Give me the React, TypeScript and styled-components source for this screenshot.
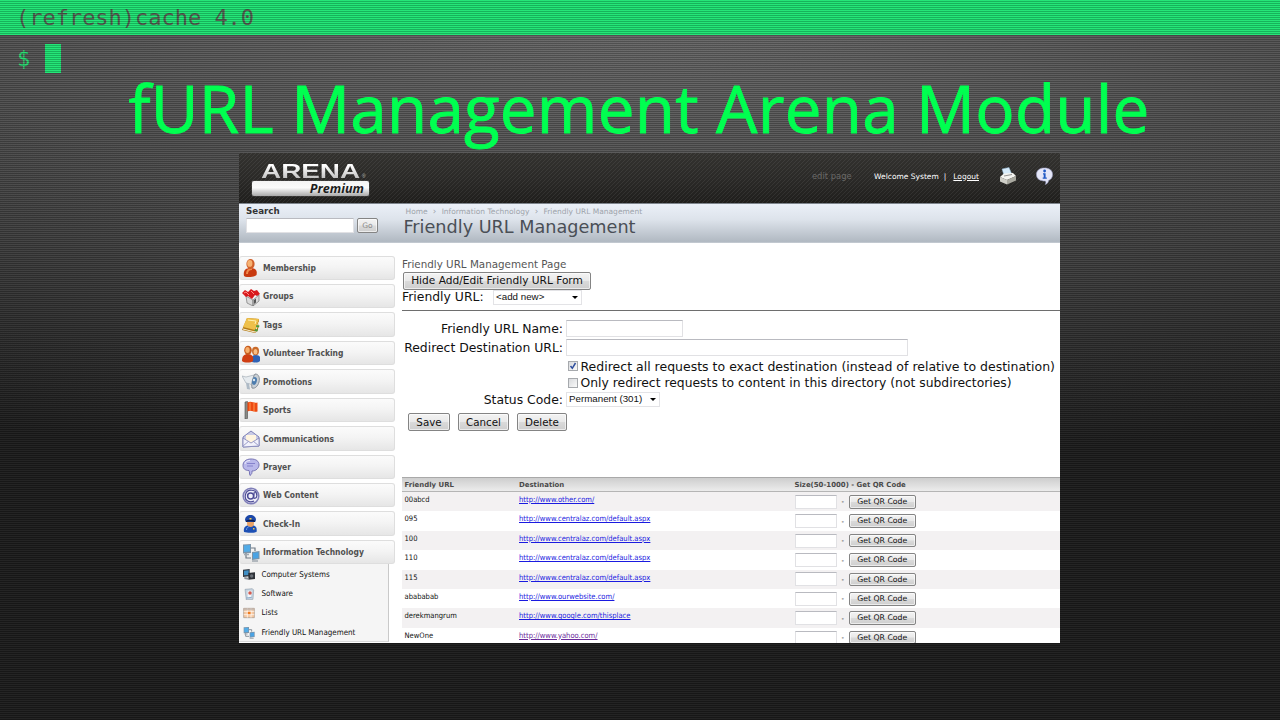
import React from 'react';
import styled, { createGlobalStyle } from 'styled-components';

const verdana = '"DejaVu Sans", Verdana, sans-serif';
const tahoma = '"DejaVu Sans Condensed", "DejaVu Sans", Tahoma, sans-serif';
const arial = '"Liberation Sans", Arial, sans-serif';

const GlobalStyle = createGlobalStyle`
  * { box-sizing: border-box; }
  body { margin: 0; overflow: hidden; background: #161616; }
`;

const Slide = styled.div`
  position: relative;
  width: 1280px;
  height: 720px;
  overflow: hidden;
  display: flex;
  flex-direction: column;
  background: radial-gradient(
    ellipse 1800px 460px at 50% 0,
    #6a6a6a 0%, #656565 12%, #555 35%, #404040 62%, #2d2d2d 82%, #1d1d1d 100%
  );
`;

const Scanlines = styled.div`
  position: absolute;
  inset: 0;
  pointer-events: none;
  background: repeating-linear-gradient(
    to bottom,
    rgba(255, 255, 255, 0.03) 0 1px,
    rgba(0, 0, 0, 0.22) 1px 2px
  );
`;

const TerminalBar = styled.header`
  flex: none;
  height: 35px;
  padding-left: 16px;
  background: #1ee574;
  color: #555c50;
  font: 22px/36px "DejaVu Sans Mono", Consolas, monospace;
  letter-spacing: -0.02px;
  white-space: pre;
`;

const Prompt = styled.div`
  flex: none;
  height: 38px;
  padding: 9px 0 0 17px;
  display: flex;
  gap: 15px;
  color: #25dc70;
  font: 22px/29px "DejaVu Sans Mono", Consolas, monospace;
`;

const Cursor = styled.span`
  width: 16px;
  height: 29px;
  background: #1ee574;
`;

const Title = styled.h1`
  position: relative;
  flex: none;
  margin: 0;
  height: 80px;
  padding-right: 2px;
  text-align: center;
  color: #00ff50;
  font: 400 65.5px/69px "Open Sans", Calibri, sans-serif;
  -webkit-text-stroke: 0.9px #00ff50;
  letter-spacing: 0.25px;
  white-space: nowrap;
`;

const Window = styled.main`
  position: relative;
  flex: none;
  width: 821px;
  height: 490px;
  margin-left: 239px;
  overflow: hidden;
  display: flex;
  flex-direction: column;
  background: #fff;
  font-family: ${verdana};
  white-space: nowrap;
`;

const Masthead = styled.div`
  flex: none;
  height: 51px;
  display: flex;
  justify-content: space-between;
  border-bottom: 1px solid #7d848c;
  background:
    repeating-linear-gradient(135deg, rgba(255, 255, 255, 0.07) 0 1px, transparent 1px 2.83px),
    linear-gradient(#33322f, #2a2927 55%, #1f1e1c);
`;

const Brand = styled.div`
  width: 117px;
  margin: 8px 0 0 13px;
`;

const BrandName = styled.div`
  height: 19px;
  padding-left: 9px;
  display: flex;
  align-items: flex-end;
  color: #e8e8e8;
  font: 700 20.5px/19px ${arial};
`;

const BrandWord = styled.span`
  width: 101px;
  flex: none;
  transform: scaleX(1.36);
  transform-origin: left;
  background: linear-gradient(#fff 25%, #b9b9b9);
  background-clip: text;
  color: transparent;
`;

const Registered = styled.span`
  font: 5px/8px ${arial};
  color: #bbb;
`;

const BrandTier = styled.div`
  height: 15px;
  margin-top: 1px;
  padding-right: 5px;
  border-radius: 2px;
  text-align: right;
  color: #1d1d1d;
  background: linear-gradient(#f4f4f4, #fbfbfb 45%, #a9a9a9);
  box-shadow: 0 0 1px #ddd;
  font: italic 700 12.6px/15px "Open Sans", sans-serif;
`;

const Account = styled.div`
  height: 46px;
  padding-right: 7px;
  display: flex;
  align-items: center;
  color: #fff;
  font-size: 7.5px;
`;

const EditPage = styled.span`
  margin-right: 22.5px;
  color: #6b6a68;
  font-size: 8.4px;
`;

const Divider = styled.span`
  margin: 0 7px 0 5px;
`;

const Logout = styled.span`
  margin-right: 20px;
  text-decoration: underline;
`;

const HelpSlot = styled.span`
  display: flex;
  margin-left: 19px;
`;

const SubHeader = styled.div`
  flex: none;
  height: 39px;
  display: flex;
  background: linear-gradient(#ebf0f8, #dde3eb 40%, #b1b9c2 96%, #c9cfd6);
`;

const SearchBox = styled.div`
  width: 164.5px;
  padding: 1px 0 0 7px;
  font: 700 8.7px/12px ${verdana};
  color: #333;
`;

const SearchRow = styled.div`
  display: flex;
  gap: 3px;
  margin-top: 1px;
`;

const TextField = styled.span<{ $w: number; $h: number }>`
  flex: none;
  display: block;
  width: ${(p) => p.$w}px;
  height: ${(p) => p.$h}px;
  border: 1px solid #e1e1e4;
  border-top-color: #b9bac0;
  background: #fff;
`;

const PushButton = styled.span<{ $w: number; $h: number; $size: number; $muted?: boolean }>`
  flex: none;
  display: flex;
  align-items: center;
  justify-content: center;
  width: ${(p) => p.$w}px;
  height: ${(p) => p.$h}px;
  border: 1px solid #848484;
  border-radius: 2px;
  background: linear-gradient(#f3f3f3, #e9e9e9 48%, #dadada 52%, #cecece);
  box-shadow: inset 0 0 0 1px rgba(255, 255, 255, 0.6);
  color: ${(p) => (p.$muted ? '#888' : '#111')};
  font: 400 ${(p) => p.$size}px/1 ${verdana};
`;

const Heading = styled.div`
  padding-top: 2px;
`;

const Breadcrumb = styled.div`
  height: 11px;
  padding-left: 2px;
  display: flex;
  color: #9ea4ab;
  font-size: 7.5px;
  line-height: 11px;
`;

const Chevron = styled.span`
  width: 14px;
  text-align: center;
  font-size: 9px;
  line-height: 10px;
`;

const PageTitle = styled.div`
  color: #4a4f56;
  font-size: 17.65px;
  line-height: 20px;
`;

const Content = styled.div`
  flex: 1;
  min-height: 0;
  display: flex;
`;

const Sidebar = styled.nav`
  flex: none;
  width: 163px;
  padding-top: 12.6px;
`;

const NavItem = styled.div`
  width: 156px;
  height: 24.4px;
  margin-bottom: 4.04px;
  padding: 1px 0 0 2px;
  display: flex;
  align-items: center;
  gap: 3px;
  border: 1px solid #dedede;
  border-left-color: #ececec;
  border-radius: 3px;
  background: linear-gradient(#fbfbfb, #f4f4f4 45%, #e6e6e6);
  color: #505050;
  font: 700 8.45px/1 ${tahoma};
`;

const SubMenu = styled.div`
  width: 150px;
  height: 78px;
  margin-top: -4px;
  padding-top: 0.6px;
  border-right: 1px solid #c9c9c9;
  border-bottom: 1px solid #d8d8d8;
  background: #f5f5f5;
`;

const SubItem = styled.div`
  height: 19.4px;
  padding-left: 4px;
  display: flex;
  align-items: center;
  gap: 6.5px;
  color: #111;
  font: 400 7.95px/1 ${tahoma};
`;

const Page = styled.section`
  flex: 1;
  min-width: 0;
  color: #111;
`;

const PageNote = styled.div`
  padding-top: 14px;
  height: 28.5px;
  color: #555;
  font-size: 10.35px;
  line-height: 15px;
`;

const ToggleRow = styled.div`
  padding-left: 1px;
`;

const PickerRow = styled.div`
  height: 21.5px;
  display: flex;
  gap: 9px;
  border-bottom: 1px solid #6e6e6e;
  font-size: 12.4px;
  line-height: 14px;
`;

const Select = styled.span<{ $w: number }>`
  flex: none;
  display: flex;
  align-items: center;
  justify-content: space-between;
  width: ${(p) => p.$w}px;
  height: 15px;
  padding: 0 3px 0 2.5px;
  border: 1px solid #e3e3e6;
  background: #fff;
  font: 400 9.75px/1 ${arial};
`;

const Caret = styled.span`
  width: 0;
  border: 3px solid transparent;
  border-top-color: #000;
  border-bottom: 0;
`;

const Form = styled.div`
  padding-top: 7.5px;
  height: 102px;
`;

const FormRow = styled.div<{ $h: number }>`
  display: grid;
  grid-template-columns: 161px 1fr;
  column-gap: 2.5px;
  align-items: center;
  height: ${(p) => p.$h}px;
  font-size: 12.4px;
`;

const Label = styled.span`
  text-align: right;
`;

const CheckLine = styled.span<{ $size: number }>`
  display: flex;
  align-items: center;
  gap: 2.5px;
  padding-left: 2.5px;
  font-size: ${(p) => p.$size}px;
`;

const Checkbox = styled.span`
  flex: none;
  width: 10px;
  height: 10px;
  display: flex;
  border: 1px solid #a6a9ad;
  background: linear-gradient(135deg, #d8dadd, #fafafa);
`;

const Actions = styled.div`
  height: 64px;
  padding-left: 6px;
  display: flex;
  gap: 8px;
`;

const Grid = styled.div`
  font-family: ${tahoma};
`;

const GridHead = styled.div`
  display: grid;
  grid-template-columns: 114.5px 275.5px 1fr;
  height: 15px;
  padding-left: 2.5px;
  border-top: 1px solid #a9a9a9;
  border-bottom: 1px solid #b5b5b5;
  background: linear-gradient(#cecece, #ececec);
  color: #4a4a4a;
  font: 700 6.95px/14px ${verdana};
`;

const GridRow = styled.div<{ $alt: boolean }>`
  display: grid;
  grid-template-columns: 114.5px 275.5px 1fr;
  height: 19.42px;
  padding: 1px 0 0 2.5px;
  background: ${(p) => (p.$alt ? '#f3f1f2' : '#fff')};
  font-size: 7.55px;
  line-height: 13px;
`;

const Link = styled.span<{ $visited?: boolean }>`
  color: ${(p) => (p.$visited ? '#6a2a9a' : '#1a1ae0')};
  text-decoration: underline;
`;

const QrCell = styled.div`
  display: flex;
  align-items: center;
  height: 17.6px;
`;

const Dash = styled.span`
  width: 12.5px;
  text-align: center;
`;

type IconName =
  | 'member' | 'groups' | 'tags' | 'volunteers' | 'promo' | 'flag' | 'mail'
  | 'prayer' | 'at' | 'officer' | 'network' | 'systems' | 'software' | 'lists';

const art: Record<IconName, React.ReactNode> = {
  member: (
    <>
      <path d="M2 17c-1-5 1-8 6.500-8s7 3 6 7c-2 2-10 3-12.500 1z" fill="#c83a10" />
      <path d="M5 15c0-4 2-5 5-5" stroke="#ef8a4c" strokeWidth="2" fill="none" />
      <ellipse cx="8.5" cy="5" rx="4.1" ry="4.9" fill="#d0602a" />
      <ellipse cx="7.8" cy="4.4" rx="2.6" ry="3.4" fill="#f7b272" />
    </>
  ),
  groups: (
    <>
      <path d="M4 8l7 4v6l-6-3zM11 12l6-5v6l-6 5z" fill="#dadada" stroke="#777" strokeWidth=".7" />
      <path d="M12 12l2-1.500v4l-2 1.500z" fill="#555" />
      <path d="M0 5l3-3 3 2 3-3 3 2 3-1 3 4-3 2-2 -1-3 4-4-3-2 1z" fill="#d8191c" />
      <path d="M2 5l2-1 3 3M9 3l3 3" stroke="#ff8a80" fill="none" />
    </>
  ),
  tags: (
    <>
      <path d="M5 2l12 1-1 11-3 3-13-3z" fill="#b57a14" />
      <path d="M5 2l12 1-4 11-12-3z" fill="#eec04a" />
      <path d="M6 4l8 1-1 3" stroke="#fff0b0" fill="none" />
      <path d="M1 13l12 3 4-10" stroke="#f7efd2" fill="none" />
      <path d="M14.500 9l3 .5-.5 2-3-.5zM13 13l3 .5-.6 2-3-.5z" fill="#4b9a3a" />
    </>
  ),
  volunteers: (
    <>
      <path d="M9 16c0-5 2-6 5-6 4 0 5 3 4 6-2 2-7 2-9 0z" fill="#2f62b5" />
      <ellipse cx="13.5" cy="6" rx="3.5" ry="4.2" fill="#c96a2a" />
      <ellipse cx="13.5" cy="6.8" rx="2" ry="2.7" fill="#f7bd84" />
      <path d="M0 16c0-5 2-7 6-7s6 3 5 7c-2 2-9 2-11 0z" fill="#cf3d12" />
      <ellipse cx="6" cy="5.3" rx="3.8" ry="4.5" fill="#c75b1c" />
      <ellipse cx="5.5" cy="5" rx="2.2" ry="3" fill="#f7ae6c" />
    </>
  ),
  promo: (
    <>
      <path d="M0 3l4 1 8-2 1 12-5-3-4-1z" fill="#e6ebef" stroke="#a5afb8" strokeWidth=".7" />
      <path d="M4 10l1 6 3 .5-1-6z" fill="#aebac6" />
      <path d="M13 1c4 0 5 4 4 8s-4 7-7 6c-1-4 1-11 3-14z" fill="#c9d0d6" stroke="#868e96" />
      <ellipse cx="12.500" cy="8" rx="2.300" ry="4" transform="rotate(15 12.500 8)" fill="#4c7cae" />
      <circle cx="12" cy="7" r="1.200" fill="#dce8f2" />
    </>
  ),
  flag: (
    <>
      <path d="M3 1l2.500-.5v17l-2.500.5z" fill="#8a8a86" stroke="#4a4a4a" strokeWidth=".6" />
      <path d="M5.500 1.500c4-2 6 1 10 0v9c-4 1-6-2-10 0z" fill="#ec4a12" />
      <path d="M8 1.500v8M12 2v8.500" stroke="#ff8a45" strokeWidth="1.200" />
    </>
  ),
  mail: (
    <>
      <path d="M1 7l8-6 8 6v9l-16 1z" fill="#c9cbe6" stroke="#7f82b6" />
      <path d="M4 5h10v6l-5 3-5-3z" fill="#fff5df" />
      <path d="M1 8l8 5 8-5v8l-16 1z" fill="#f1f1fb" stroke="#7f82b6" strokeWidth=".8" />
      <path d="M1 16l6-5M17 16l-6-5" stroke="#9c9fca" />
    </>
  ),
  prayer: (
    <>
      <path d="M9 1c5 0 8 2 8 6 0 3-3 6-7 6 0 2 0 3-2 4.500-1-2 0-3-1-5-4 0-6-2-6-5 0-4 3-6.500 8-6.500z" fill="#b9b8ea" stroke="#7774b4" />
      <path d="M5 5.500h8M5 8h6" stroke="#8582cc" />
      <path d="M3 6c0-2 2-3.500 5-3.500" stroke="#eeeefc" fill="none" />
    </>
  ),
  at: (
    <>
      <circle cx="9" cy="9" r="7.800" fill="#efeffa" stroke="#7f7eb8" strokeWidth="1.600" />
      <circle cx="8.600" cy="9" r="3" fill="none" stroke="#4c4b95" strokeWidth="1.500" />
      <path d="M12.300 5l-.7 5c0 2 3 1.800 3.300-1.200 0-7-10-7.500-11.500-1C2 14 8 16 12 14" fill="none" stroke="#4c4b95" strokeWidth="1.200" />
    </>
  ),
  officer: (
    <>
      <path d="M2 17c-1-5 2-7 6.500-7s7 2 6 7c-3 1-9.500 1-12.500 0z" fill="#1c4fb4" />
      <ellipse cx="8.500" cy="8" rx="3.500" ry="4" fill="#e9a266" />
      <path d="M3 5c0-3 2.500-5 5.500-5s5.500 2 5.500 5l-1 2h-9z" fill="#1d48a8" />
      <path d="M4 6.500c2-1.500 7-1.500 9 0" stroke="#0c1d50" strokeWidth="1.500" fill="none" />
      <path d="M7.500 3h2v1.500h-2zM11 13h1.500v1.500H11z" fill="#f5c94a" />
      <path d="M4.500 15c0-2 1-3 3-3.500" stroke="#6b9be8" fill="none" />
    </>
  ),
  network: (
    <>
      <path d="M1 0.500l8-.5v9l-8 .5z" fill="#7b93a8" />
      <path d="M2 1.500l6-.4v6.500l-6 .4z" fill="#52ace8" />
      <path d="M10 8l7.500-1v8l-7.500 1z" fill="#7b93a8" />
      <path d="M11 9l5.500-.8v5.800l-5.500.8z" fill="#4aa3e4" />
      <path d="M4 9v5h5M9 4h4v3" stroke="#707b85" strokeWidth="1.200" fill="none" />
      <path d="M2 10.500h5M10 17h6" stroke="#a0a8b0" strokeWidth="1.500" />
    </>
  ),
  systems: (
    <>
      <path d="M0 1l10-1v11l-10 1z" fill="#333b45" />
      <path d="M1.500 2.500l7-.6v7l-7 .6z" fill="#3f8ec4" />
      <path d="M8 6l10-1v10l-10 1z" fill="#2e3238" />
      <circle cx="13" cy="10.500" r="2.500" fill="#6a7078" />
      <path d="M2 12l6 1v3l-6-1z" fill="#8d939b" />
    </>
  ),
  software: (
    <>
      <path d="M3 2l11-1 2 2-1 14-10 1z" fill="#c5d3df" stroke="#8796a5" strokeWidth=".8" />
      <path d="M7 4l6 0-1 10-5 1z" fill="#f2f6fa" />
      <circle cx="10.500" cy="7.500" r="2.600" fill="#d45a4d" />
      <path d="M5 15l8-1" stroke="#6a93bd" />
    </>
  ),
  lists: (
    <>
      <path d="M1 2h16v14H1z" fill="#f7c9a2" stroke="#a08f84" />
      <path d="M6.500 6.500h5.500v5h-5.500z" fill="#ef7b1e" />
      <path d="M1 6.500h16M1 11.500h16M6.500 2v14M12 2v14" stroke="#fff" />
      <path d="M1 2h16v3H1z" fill="#bfb6b2" opacity=".8" />
    </>
  ),
};

const Icon = ({ name, size }: { name: IconName; size: number }) => (
  <svg width={size} height={size} viewBox="0 0 18 18">{art[name]}</svg>
);

const PrinterIcon = () => (
  <svg width="18" height="18" viewBox="0 0 18 18">
    <path d="M3 2l7-1.500 3 7-8 1z" fill="#d6ebfa" stroke="#8fb4cf" strokeWidth=".5" />
    <path d="M1 10l4-3.500L14 6l3 3-9 4z" fill="#f4f4f0" />
    <path d="M1 10l7 3v4.500l-7-3z" fill="#cfcfc8" />
    <path d="M8 13l9-4v4.500l-9 4z" fill="#a9a9a0" />
    <path d="M5 9l8-1.500" stroke="#777" strokeWidth=".8" />
  </svg>
);

const HelpIcon = () => (
  <svg width="17" height="18" viewBox="0 0 17 18">
    <path d="M8.500 1c5 0 8 2.500 8 6.500 0 3-1.500 5-4 6 0 1.500-1 3-3 4 .5-1.500.5-2.500 0-3.500C4 14 .5 12 .5 7.500.500 3.500 3.500 1 8.500 1z" fill="#e4e6f8" stroke="#a5a8cf" strokeWidth=".6" />
    <circle cx="8.600" cy="4" r="1.400" fill="#1f58c4" />
    <path d="M7 6.300h2.600v4.200h1.200v1.200H6.700v-1.200h1V7.500H7z" fill="#1f58c4" />
  </svg>
);

const CheckMark = () => (
  <svg width="8" height="8" viewBox="0 0 8 8">
    <path d="M1.500 4l1.800 2.300L6.500 1" fill="none" stroke="#2f4f9e" strokeWidth="1.500" />
  </svg>
);

const navItems: [IconName, string][] = [
  ['member', 'Membership'],
  ['groups', 'Groups'],
  ['tags', 'Tags'],
  ['volunteers', 'Volunteer Tracking'],
  ['promo', 'Promotions'],
  ['flag', 'Sports'],
  ['mail', 'Communications'],
  ['prayer', 'Prayer'],
  ['at', 'Web Content'],
  ['officer', 'Check-In'],
  ['network', 'Information Technology'],
];

const subItems: [IconName, string][] = [
  ['systems', 'Computer Systems'],
  ['software', 'Software'],
  ['lists', 'Lists'],
  ['network', 'Friendly URL Management'],
];

const urls: [string, string][] = [
  ['00abcd', 'http://www.other.com/'],
  ['095', 'http://www.centralaz.com/default.aspx'],
  ['100', 'http://www.centralaz.com/default.aspx'],
  ['110', 'http://www.centralaz.com/default.aspx'],
  ['115', 'http://www.centralaz.com/default.aspx'],
  ['abababab', 'http://www.ourwebsite.com/'],
  ['derekmangrum', 'http://www.google.com/thisplace'],
  ['NewOne', 'http://www.yahoo.com/'],
];

export default function App() {
  return (
    <Slide>
      <GlobalStyle />
      <TerminalBar>(refresh)cache 4.0</TerminalBar>
      <Prompt>
        <span>$</span>
        <Cursor />
      </Prompt>
      <Scanlines />
      <Title>fURL Management Arena Module</Title>
      <Window>
        <Masthead>
          <Brand>
            <BrandName>
              <BrandWord>ARENA</BrandWord>
              <Registered>®</Registered>
            </BrandName>
            <BrandTier>Premium</BrandTier>
          </Brand>
          <Account>
            <EditPage>edit page</EditPage>
            <span>Welcome System</span>
            <Divider>|</Divider>
            <Logout>Logout</Logout>
            <PrinterIcon />
            <HelpSlot><HelpIcon /></HelpSlot>
          </Account>
        </Masthead>
        <SubHeader>
          <SearchBox>
            Search
            <SearchRow>
              <TextField $w={108} $h={15} />
              <PushButton $w={21} $h={15} $size={7.5} $muted>Go</PushButton>
            </SearchRow>
          </SearchBox>
          <Heading>
            <Breadcrumb>
              <span>Home</span><Chevron>›</Chevron>
              <span>Information Technology</span><Chevron>›</Chevron>
              <span>Friendly URL Management</span>
            </Breadcrumb>
            <PageTitle>Friendly URL Management</PageTitle>
          </Heading>
        </SubHeader>
        <Content>
          <Sidebar>
            {navItems.map(([icon, label]) => (
              <NavItem key={label}><Icon name={icon} size={18} />{label}</NavItem>
            ))}
            <SubMenu>
              {subItems.map(([icon, label]) => (
                <SubItem key={label}><Icon name={icon} size={12} />{label}</SubItem>
              ))}
            </SubMenu>
          </Sidebar>
          <Page>
            <PageNote>Friendly URL Management Page</PageNote>
            <ToggleRow>
              <PushButton $w={188} $h={18} $size={10.6}>Hide Add/Edit Friendly URL Form</PushButton>
            </ToggleRow>
            <PickerRow>
              Friendly URL:
              <Select $w={89}>&lt;add new&gt;<Caret /></Select>
            </PickerRow>
            <Form>
              <FormRow $h={19}>
                <Label>Friendly URL Name:</Label>
                <TextField $w={117} $h={17} />
              </FormRow>
              <FormRow $h={20}>
                <Label>Redirect Destination URL:</Label>
                <TextField $w={342} $h={17} />
              </FormRow>
              <FormRow $h={17}>
                <span />
                <CheckLine $size={12.5}>
                  <Checkbox><CheckMark /></Checkbox>
                  Redirect all requests to exact destination (instead of relative to destination)
                </CheckLine>
              </FormRow>
              <FormRow $h={16}>
                <span />
                <CheckLine $size={12.36}>
                  <Checkbox />
                  Only redirect requests to content in this directory (not subdirectories)
                </CheckLine>
              </FormRow>
              <FormRow $h={17}>
                <Label>Status Code:</Label>
                <Select $w={94}>Permanent (301)<Caret /></Select>
              </FormRow>
            </Form>
            <Actions>
              <PushButton $w={42} $h={18} $size={10.3}>Save</PushButton>
              <PushButton $w={51} $h={18} $size={10.3}>Cancel</PushButton>
              <PushButton $w={50} $h={18} $size={10.3}>Delete</PushButton>
            </Actions>
            <Grid>
              <GridHead>
                <span>Friendly URL</span>
                <span>Destination</span>
                <span>Size(50-1000) - Get QR Code</span>
              </GridHead>
              {urls.map(([name, href], i) => (
                <GridRow key={name} $alt={i % 2 === 0}>
                  <span>{name}</span>
                  <span><Link $visited={name === 'NewOne'}>{href}</Link></span>
                  <QrCell>
                    <TextField $w={42} $h={14} />
                    <Dash>-</Dash>
                    <PushButton $w={66.5} $h={13.6} $size={7.75}>Get QR Code</PushButton>
                  </QrCell>
                </GridRow>
              ))}
            </Grid>
          </Page>
        </Content>
      </Window>
    </Slide>
  );
}
